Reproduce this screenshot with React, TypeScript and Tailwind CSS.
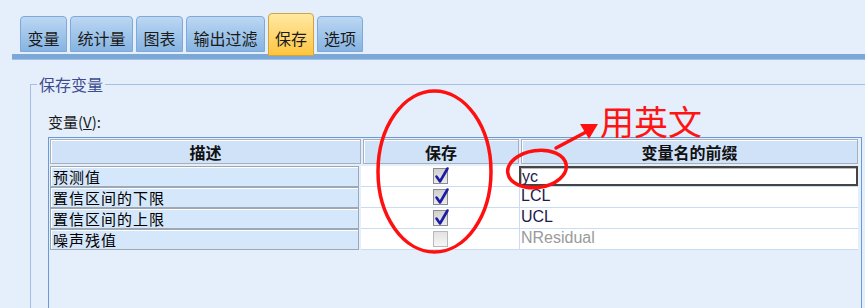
import { ReactNode } from "react";

const tabs = [
  { label: "变量", w: "w-[47px]" },
  { label: "统计量", w: "w-[63px]" },
  { label: "图表", w: "w-[47px]" },
  { label: "输出过滤", w: "w-[79px]" },
  { label: "保存", w: "w-[46px]", active: true },
  { label: "选项", w: "w-[46px]" },
];

const rows = [
  { desc: "预测值", checked: true, prefix: "yc", editing: true },
  { desc: "置信区间的下限", checked: true, prefix: "LCL" },
  { desc: "置信区间的上限", checked: true, prefix: "UCL" },
  { desc: "噪声残值", checked: false, prefix: "NResidual", muted: true },
];

const cjk = "font-['Noto_Sans_CJK_SC','Noto_Sans',sans-serif]";

function Tab({ label, w, active }: { label: string; w: string; active?: boolean }): ReactNode {
  if (active) {
    return (
      <div className={`${w} h-[43px] -mb-[2px] relative z-10 rounded-t-[4px] border border-[#d4a23e] bg-gradient-to-b from-[#ffe9a0] to-[#ffc53a] flex items-center justify-center pt-[6px] text-[16px] text-[#1a1a1a] ${cjk}`}>
        {label}
      </div>
    )
  }
  return (
    <div className={`${w} h-[36px] mb-[2px] rounded-t-[4px] border border-[#7fa9d8] bg-gradient-to-b from-[#bcd7f2] to-[#86b4e1] flex items-center justify-center pt-[8px] text-[16px] text-[#1a1a1a] ${cjk}`}>
      {label}
    </div>
  )
}

function CheckBox({ checked }: { checked: boolean }): ReactNode {
  if (!checked) {
    return <div className="w-[15px] h-[16px] border border-[#b9b9b9] bg-gradient-to-b from-[#e2e2e2] to-[#f6f6f6]" />
  }
  return (
    <div className="relative w-[15px] h-[16px] border border-[#8c8c8c] bg-gradient-to-b from-[#cfcfcf] to-[#ececec]">
      <svg className="absolute -left-[1px] -top-[3px]" width="18" height="19" viewBox="0 0 18 19">
        <path d="M3.5 10.5 L7 15.5 L14.5 2.5" fill="none" stroke="#1b1ba6" strokeWidth="2.6" strokeLinecap="round" strokeLinejoin="round" />
      </svg>
    </div>
  )
}

export default function App(): ReactNode {
  return (
    <div className="relative w-[865px] h-[308px] overflow-hidden bg-[#e4effb] flex flex-col">
      <div className="shrink-0 flex items-end gap-[3px] pl-[20px] h-[54px]">
        {tabs.map((tab) => <Tab key={tab.label} {...tab} />)}
      </div>
      <div className="shrink-0 ml-[12px] h-[6px] bg-[#7ba8d7] border-b border-[#9fc0e6]" />

      <fieldset className="shrink-0 ml-[30px] mt-[16px] h-[260px] border-l border-t border-[#a3bfe3]">
        <legend className={`ml-[6px] px-[2px] text-[16px] leading-[16px] text-[#3f4b8f] ${cjk}`}>保存变量</legend>
        <div className="pl-[17px] pt-[22px] flex flex-col">
          <div className={`shrink-0 text-[15px] leading-[16px] text-[#1a1a1a] ${cjk}`}>
            变量(<span className="underline">V</span>):
          </div>

          <div className="shrink-0 mt-[7px] w-[814px] h-[200px] border-l border-t border-r border-[#6a9ad5] pl-[1px] pt-[1px]">
            <div className={`flex gap-[2px] h-[25px] text-[16px] font-bold text-[#111] ${cjk}`}>
              <div className="w-[311px] flex items-center justify-center bg-[#cfe2f8] border border-[#a6b0bc] shadow-[inset_1px_1px_0_#ffffff]">描述</div>
              <div className="w-[156px] flex items-center justify-center bg-[#cfe2f8] border border-[#a6b0bc] shadow-[inset_1px_1px_0_#ffffff]">保存</div>
              <div className="w-[337px] flex items-center justify-center bg-[#cfe2f8] border border-[#a6b0bc] shadow-[inset_1px_1px_0_#ffffff]">变量名的前缀</div>
            </div>

            <div className="mt-[2px] flex flex-col">
              {rows.map((row) => (
                <div key={row.desc} className="shrink-0 flex h-[21px]">
                  <div className={`w-[309px] mr-[2px] bg-[#d5e7fa] border border-[#9ea8b4] shadow-[inset_1px_1px_0_#ffffff] pl-[2px] pt-[1px] text-[15px] leading-[17px] tracking-[1px] text-black ${cjk}`}>
                    {row.desc}
                  </div>
                  <div className="w-[158px] bg-white border-b border-[#cadcf1] flex items-center justify-center">
                    <CheckBox checked={row.checked} />
                  </div>
                  <div className="w-[339px] bg-white border-l border-b border-[#cadcf1] flex">
                    <div className={`flex-1 pl-[1px] font-['Liberation_Sans',Arial,sans-serif] text-[16px] leading-[18px] ${row.muted ? "text-[#9a9a9a]" : "text-[#1c1c4c]"} ${row.editing ? "border-2 border-[#444] shadow-[inset_1px_1px_0_#bbb] -ml-[1px]" : ""}`}>
                      {row.prefix}
                    </div>
                  </div>
                </div>
              ))}
            </div>
          </div>
        </div>
      </fieldset>

      <svg className="absolute inset-0 pointer-events-none" width="865" height="308" viewBox="0 0 865 308">
        <ellipse cx="434.5" cy="171.5" rx="56.5" ry="80.5" fill="none" stroke="#ff1010" strokeWidth="3.5" />
        <ellipse cx="537" cy="169" rx="29.5" ry="18.5" fill="none" stroke="#ff1010" strokeWidth="3.5" transform="rotate(-8 537 169)" />
        <line x1="556" y1="148" x2="588" y2="131" stroke="#ff1010" strokeWidth="3.5" strokeLinecap="round" />
        <polygon points="598,124 580,124 589,139" fill="#ff1010" />
      </svg>
      <div className={`absolute left-[600px] top-[104px] text-[34px] leading-[34px] text-[#ff1414] ${cjk}`}>用英文</div>
    </div>
  )
}
